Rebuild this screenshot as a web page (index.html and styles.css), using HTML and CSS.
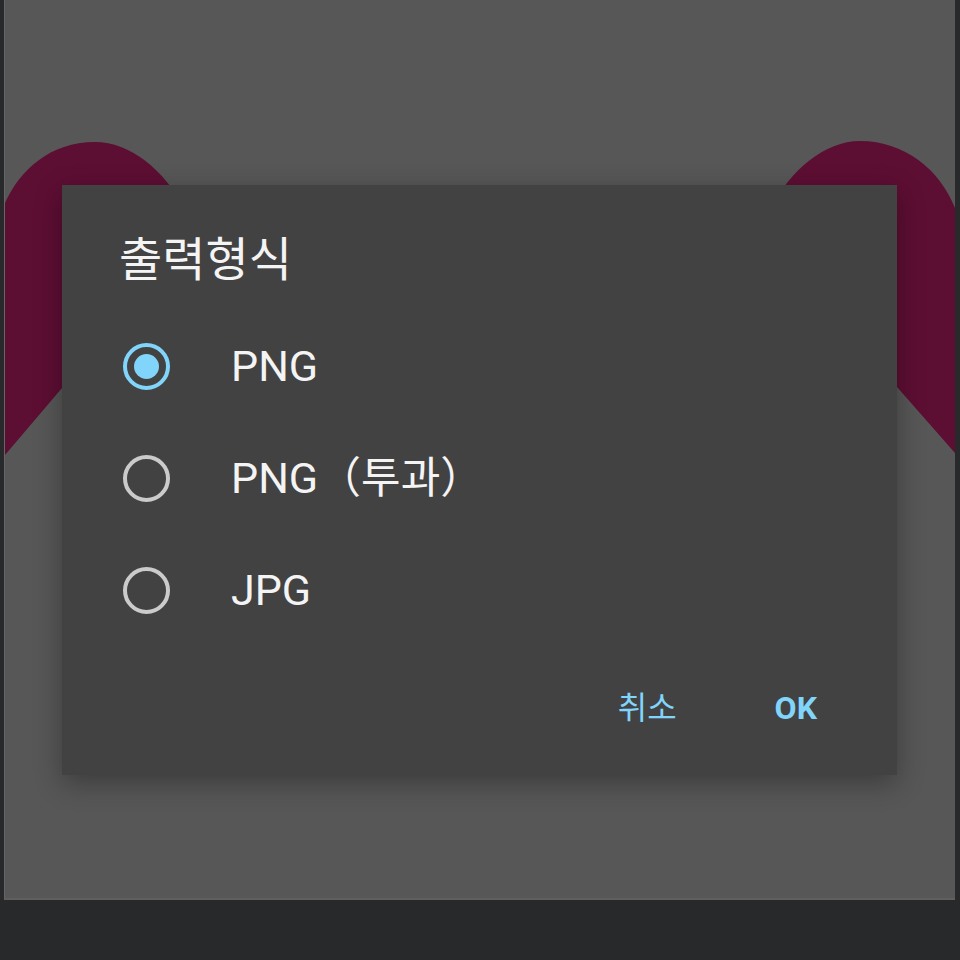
FILE: index.html
```html
<!DOCTYPE html>
<html lang="ko">
<head>
    <meta charset="utf-8"/>
    <title>출력형식</title>
    <link rel="stylesheet" href="styles.css">
</head>
<body>
    <div class="screen">
        <!-- background artwork behind the dialog -->
        <svg class="art" viewBox="5 0 950 898" width="950" height="898">
            <path class="lobe" d="M185 210 C165 170 130 142 95 142 C50 142 20 170 5 203 L5 455 L62 388 L185 250 Z"/>
            <path class="lobe" d="M770 210 C790 170 825 141 860 141 C905 141 940 170 955 208 L955 453 L897 387 L770 250 Z"/>
        </svg>

        <div class="dialog">
            <h1 class="title">출력형식</h1>

            <div class="options">
                <label class="option">
                    <span class="radio checked"></span>
                    <span class="label">PNG</span>
                </label>
                <label class="option">
                    <span class="radio"></span>
                    <span class="label">PNG（투과）</span>
                </label>
                <label class="option">
                    <span class="radio"></span>
                    <span class="label">JPG</span>
                </label>
            </div>

            <div class="actions">
                <span class="btn cancel">취소</span>
                <span class="btn ok">OK</span>
            </div>
        </div>
    </div>
</body>
</html>
```

FILE: styles.css
```css
html, body {
    margin: 0;
    background: #28292b;
    font-family: Roboto, "Noto Sans CJK KR", sans-serif;
}

.screen {
    position: relative;
    box-sizing: border-box;
    margin-left: 4px;
    width: 951px;
    height: 900px;
    padding: 185px 0 0 57px;
    background: #575757;
    border-left: 1px solid #666;
    border-bottom: 2px solid #5f5f5f;
}

.art {
    position: absolute;
    top: 0;
    left: 0;
}
.lobe {
    fill: #5d0e33;
}

.dialog {
    position: relative;
    box-sizing: border-box;
    width: 835px;
    height: 590px;
    background: #424242;
    box-shadow: 0 8px 26px rgba(0, 0, 0, 0.32);
    padding-top: 41px;
}

.title {
    margin: 0;
    padding-left: 57px;
    font-family: "Noto Sans CJK KR", sans-serif;
    font-size: 47px;
    font-weight: 400;
    line-height: 60px;
    color: #f4f4f4;
}

.options {
    margin-top: 24px;
}

.option {
    display: flex;
    align-items: center;
    height: 112px;
    padding-left: 61px;
}

.radio {
    box-sizing: border-box;
    width: 47px;
    height: 47px;
    border: 4px solid #cbcbcb;
    border-radius: 50%;
    display: flex;
    align-items: center;
    justify-content: center;
}
.radio.checked {
    border-color: #81d4fa;
}
.radio.checked::after {
    content: "";
    width: 25px;
    height: 25px;
    border-radius: 50%;
    background: #81d4fa;
}

.label {
    margin-left: 61px;
    font-size: 43px;
    line-height: 50px;
    color: #f4f4f4;
}

.actions {
    display: flex;
    justify-content: flex-end;
    gap: 98px;
    margin-top: 42px;
    padding-right: 80px;
    line-height: 40px;
}

.btn {
    font-size: 32px;
    color: #81d4fa;
}
.cancel {
    font-weight: 400;
}
.ok {
    font-weight: 700;
}
```
